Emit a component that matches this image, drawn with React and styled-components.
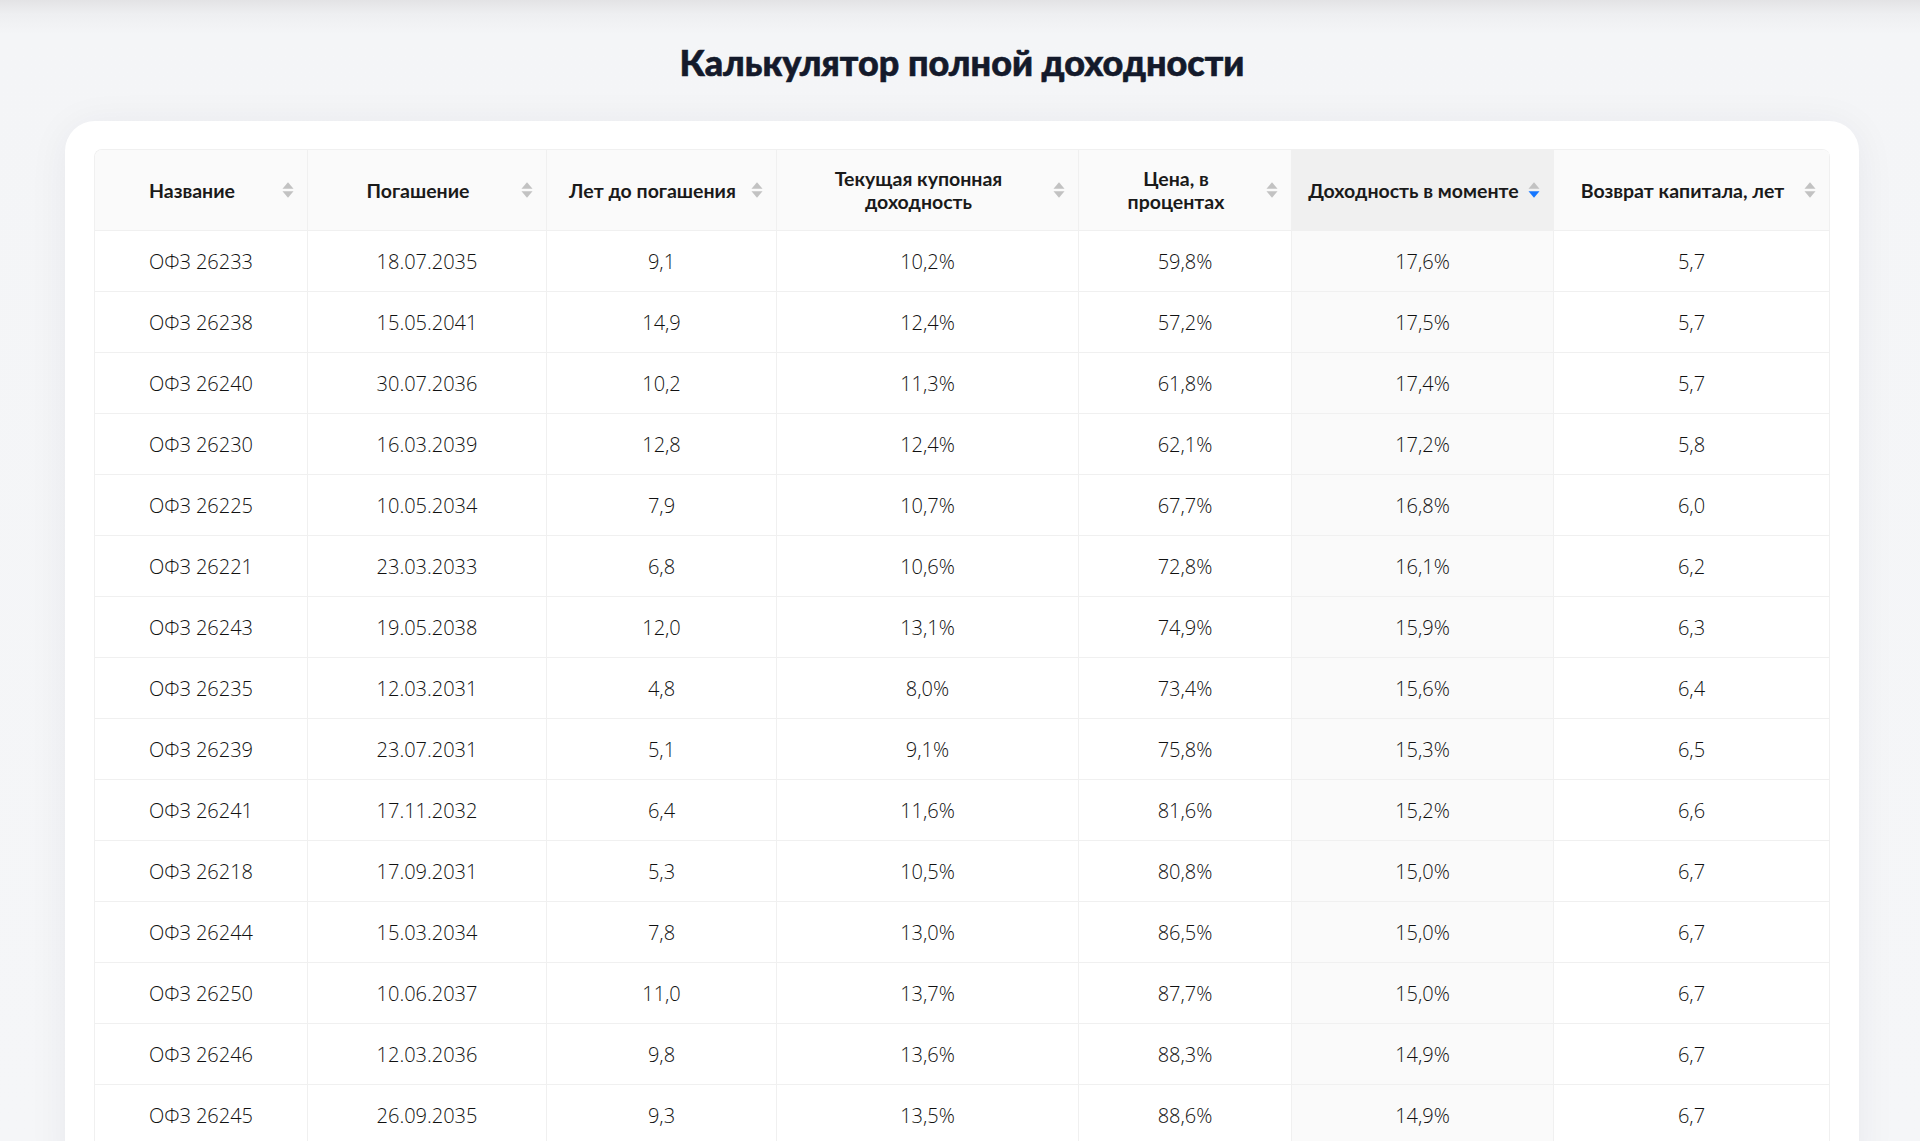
import React from 'react';
import styled, { createGlobalStyle } from 'styled-components';

const GlobalStyle = createGlobalStyle`
  html, body {
    margin: 0;
    padding: 0;
  }
  body {
    background: linear-gradient(to bottom, #e3e3e5 0px, #eeeff1 14px, #f4f5f7 34px, #f5f6f8 100%);
    font-family: 'Open Sans', 'Noto Sans', sans-serif;
    color: rgba(0, 0, 0, 0.85);
    overflow: hidden;
  }
`;

const Page = styled.div`
  height: 1141px;
  overflow: hidden;
  padding: 0 61px 0 65px;
`;

const Title = styled.h1`
  margin: 0 0 37px;
  padding-top: 40px;
  text-align: center;
  font-family: Lato, 'Noto Sans', sans-serif;
  font-size: 36px;
  font-weight: 900;
  line-height: 44px;
  color: #141a2b;
  -webkit-text-stroke: 0.6px #141a2b;
`;

const Card = styled.div`
  background: #fff;
  border-radius: 30px;
  box-shadow: 0 4px 40px rgba(20, 30, 60, 0.06);
  padding: 28px 29px 40px 29px;
`;

const Table = styled.table`
  width: 100%;
  table-layout: fixed;
  border-collapse: separate;
  border-spacing: 0;
  border-top: 1px solid #f0f0f0;
  border-left: 1px solid #f0f0f0;
  border-radius: 8px 8px 0 0;
  overflow: hidden;
`;

const Th = styled.th`
  height: 80px;
  padding: 0 13px 0 13px;
  background: ${(p) => (p.$active ? '#f0f0f0' : '#fafafa')};
  border-right: 1px solid #f0f0f0;
  border-bottom: 1px solid #f0f0f0;
  font-family: Lato, 'Noto Sans', sans-serif;
  font-size: 19.5px;
  font-weight: 700;
  line-height: 23px;
  color: #1a1a1a;
`;

const HeadInner = styled.div`
  display: flex;
  align-items: center;
  gap: 6px;
`;

const HeadTitle = styled.span`
  flex: 1;
  text-align: center;
  white-space: pre-line;
`;

const Sorter = styled.span`
  display: flex;
  flex-direction: column;
  gap: 2px;
  width: 12px;
  flex-shrink: 0;
`;

const Td = styled.td`
  height: 60px;
  padding: 0 12px;
  text-align: center;
  font-size: 20px;
  font-weight: 300;
  color: #111;
  background: ${(p) => (p.$active ? '#fafafa' : '#fff')};
  border-right: 1px solid #f0f0f0;
  border-bottom: 1px solid #f0f0f0;
  white-space: nowrap;
`;

const widths = [213, 239, 230, 302, 213, 262, 276];

const columns = [
  'Название',
  'Погашение',
  'Лет до погашения',
  'Текущая купонная\nдоходность',
  'Цена, в\nпроцентах',
  'Доходность в моменте',
  'Возврат капитала, лет',
];

const activeCol = 5;

const rows = [
  ['ОФЗ 26233', '18.07.2035', '9,1', '10,2%', '59,8%', '17,6%', '5,7'],
  ['ОФЗ 26238', '15.05.2041', '14,9', '12,4%', '57,2%', '17,5%', '5,7'],
  ['ОФЗ 26240', '30.07.2036', '10,2', '11,3%', '61,8%', '17,4%', '5,7'],
  ['ОФЗ 26230', '16.03.2039', '12,8', '12,4%', '62,1%', '17,2%', '5,8'],
  ['ОФЗ 26225', '10.05.2034', '7,9', '10,7%', '67,7%', '16,8%', '6,0'],
  ['ОФЗ 26221', '23.03.2033', '6,8', '10,6%', '72,8%', '16,1%', '6,2'],
  ['ОФЗ 26243', '19.05.2038', '12,0', '13,1%', '74,9%', '15,9%', '6,3'],
  ['ОФЗ 26235', '12.03.2031', '4,8', '8,0%', '73,4%', '15,6%', '6,4'],
  ['ОФЗ 26239', '23.07.2031', '5,1', '9,1%', '75,8%', '15,3%', '6,5'],
  ['ОФЗ 26241', '17.11.2032', '6,4', '11,6%', '81,6%', '15,2%', '6,6'],
  ['ОФЗ 26218', '17.09.2031', '5,3', '10,5%', '80,8%', '15,0%', '6,7'],
  ['ОФЗ 26244', '15.03.2034', '7,8', '13,0%', '86,5%', '15,0%', '6,7'],
  ['ОФЗ 26250', '10.06.2037', '11,0', '13,7%', '87,7%', '15,0%', '6,7'],
  ['ОФЗ 26246', '12.03.2036', '9,8', '13,6%', '88,3%', '14,9%', '6,7'],
  ['ОФЗ 26245', '26.09.2035', '9,3', '13,5%', '88,6%', '14,9%', '6,7'],
];

function SortIcon({ direction }) {
  const up = direction === 'asc' ? '#1677ff' : '#c2c2c2';
  const down = direction === 'desc' ? '#1677ff' : '#c2c2c2';
  return (
    <Sorter>
      <svg width="12" height="7" viewBox="0 0 12 7">
        <path d="M6 0.3 L11.5 6.7 L0.5 6.7 Z" fill={up} />
      </svg>
      <svg width="12" height="7" viewBox="0 0 12 7">
        <path d="M0.5 0.3 L11.5 0.3 L6 6.7 Z" fill={down} />
      </svg>
    </Sorter>
  );
}

export default function App() {
  return (
    <>
      <GlobalStyle />
      <Page>
        <Title>Калькулятор полной доходности</Title>
        <Card>
          <Table>
            <colgroup>
              {widths.map((w, i) => (
                <col key={i} style={{ width: w }} />
              ))}
            </colgroup>
            <thead>
              <tr>
                {columns.map((c, i) => (
                  <Th key={c} $active={i === activeCol}>
                    <HeadInner>
                      <HeadTitle>{c}</HeadTitle>
                      <SortIcon direction={i === activeCol ? 'desc' : null} />
                    </HeadInner>
                  </Th>
                ))}
              </tr>
            </thead>
            <tbody>
              {rows.map((r) => (
                <tr key={r[0]}>
                  {r.map((v, i) => (
                    <Td key={i} $active={i === activeCol}>
                      {v}
                    </Td>
                  ))}
                </tr>
              ))}
            </tbody>
          </Table>
        </Card>
      </Page>
    </>
  );
}
